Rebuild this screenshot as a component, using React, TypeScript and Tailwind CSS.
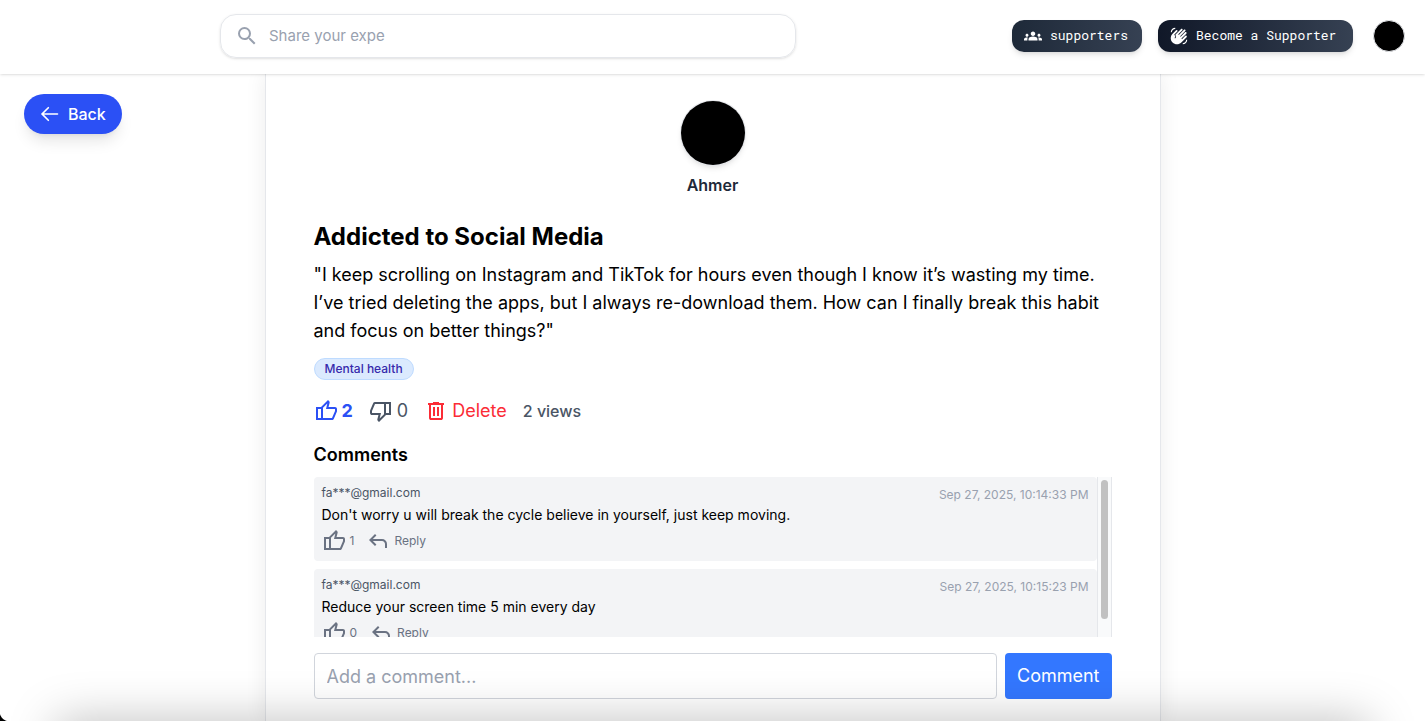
import { useState } from "react";
import type { ReactNode } from "react";
import { MdGroups, MdSearch, MdWavingHand } from "react-icons/md";

interface IconProps {
  path: string;
  className?: string;
}

const THUMB =
  "M720-120H280v-520l280-280 50 50q7 7 11.5 19t4.5 23v14l-44 174h258q32 0 56 24t24 56v80q0 7-2 15t-4 15L794-168q-9 20-30 34t-44 14Zm-360-80h360l120-280v-80H480l54-220-174 174v406Zm-80-440v80H160v360h120v80H80v-520h200Z";
const TRASH =
  "M280-120q-33 0-56.5-23.5T200-200v-520h-40v-80h200v-40h240v40h200v80h-40v520q0 33-23.5 56.5T680-120H280Zm400-600H280v520h400v-520ZM360-280h80v-360h-80v360Zm160 0h80v-360h-80v360Z";
const REPLY =
  "M760-200v-160q0-50-35-85t-85-35H273l144 144-57 56-240-240 240-240 57 56-144 144h367q83 0 141.5 58.5T840-360v160h-80Z";

const Icon = ({ path, className = "" }: IconProps) => (
  <svg
    viewBox="0 -960 960 960"
    fill="currentColor"
    aria-hidden="true"
    className={`size-6 shrink-0 ${className}`}
  >
    <path d={path} />
  </svg>
);

const DarkButton = ({
  className,
  children,
}: {
  className: string;
  children: ReactNode;
}) => (
  <button
    type="button"
    className={`flex h-8 items-center gap-2 rounded-xl bg-linear-to-r to-gray-700 px-3 font-['Roboto_Mono','DejaVu_Sans_Mono',monospace] text-[13px] text-white shadow-md ${className}`}
  >
    {children}
  </button>
);

const Header = () => (
  <header className="relative z-10 flex h-[74px] items-center bg-white pr-5 pb-0.5 shadow-sm">
    <label className="ml-[220px] flex h-11 w-full max-w-[576px] items-center gap-2.5 rounded-2xl border border-gray-200 px-3.5 shadow-sm">
      <MdSearch size={24} className="shrink-0 text-gray-400" />
      <input
        type="search"
        aria-label="Search"
        placeholder="Share your expe"
        className="w-full text-[15px] outline-none placeholder:text-gray-400"
      />
    </label>
    <div className="ml-auto flex items-center gap-4 whitespace-nowrap">
      <DarkButton className="w-[130px] from-gray-800">
        <MdGroups size={18} className="shrink-0" />
        supporters
      </DarkButton>
      <DarkButton className="w-[195px] from-gray-900">
        <MdWavingHand size={18} className="shrink-0" />
        Become a Supporter
      </DarkButton>
      <button
        type="button"
        aria-label="Account"
        className="ml-1 size-8 rounded-full border border-gray-200 bg-black"
      />
    </div>
  </header>
);

interface CommentData {
  author: string;
  date: string;
  text: string;
  likes: number;
}

const comments: CommentData[] = [
  {
    author: "fa***@gmail.com",
    date: "Sep 27, 2025, 10:14:33 PM",
    text: "Don't worry u will break the cycle believe in yourself, just keep moving.",
    likes: 1,
  },
  {
    author: "fa***@gmail.com",
    date: "Sep 27, 2025, 10:15:23 PM",
    text: "Reduce your screen time 5 min every day",
    likes: 0,
  },
];

const Comment = ({ author, date, text, likes }: CommentData) => (
  <li className="rounded-sm bg-gray-100 p-2">
    <div className="flex h-4 justify-between text-xs">
      <span className="text-gray-600">{author}</span>
      <time className="pt-0.5 text-gray-400">{date}</time>
    </div>
    <p className="mt-1 text-sm">{text}</p>
    <div className="mt-1 flex items-center gap-3 text-xs text-gray-500">
      <button type="button" className="flex items-center gap-1">
        <Icon path={THUMB} />
        {likes}
      </button>
      <button type="button" className="flex items-center gap-1">
        <Icon path={REPLY} />
        Reply
      </button>
    </div>
  </li>
);

export default function App() {
  const [comment, setComment] = useState("");

  return (
    <div className="relative flex h-screen flex-col overflow-hidden bg-white font-[Inter,sans-serif] text-black">
      <Header />
      <div className="grid min-h-0 grow grid-cols-[1fr_minmax(0,896px)_1fr]">
        <div className="px-6 pt-5">
          <button
            type="button"
            className="flex h-10 items-center gap-2 rounded-full bg-[#2b50f5] px-4 font-medium text-white shadow-lg"
          >
            <svg
              viewBox="0 0 24 24"
              fill="none"
              stroke="currentColor"
              strokeWidth="2"
              strokeLinecap="round"
              className="size-5"
              aria-hidden="true"
            >
              <path d="M10 19.500 2.500 12l7.500-7.500M2.500 12h18.500" />
            </svg>
            Back
          </button>
        </div>

        <main className="border-x border-gray-200 px-12 pt-[27px] shadow-[0_0_20px_rgba(0,0,0,0.08)]">
          <div className="flex flex-col items-center">
            <div className="size-16 rounded-full bg-black shadow-md ring-1 ring-gray-200" />
            <p className="mt-2 font-semibold text-gray-800">Ahmer</p>
          </div>

          <h1 className="mt-6 text-2xl font-bold">Addicted to Social Media</h1>
          <p className="mt-2 text-lg leading-7">
            "I keep scrolling on Instagram and TikTok for hours even though I
            know it’s wasting my time. I’ve tried deleting the apps, but I
            always re-download them. How can I finally break this habit and
            focus on better things?"
          </p>
          <div className="mt-3 flex h-6 items-center">
            <span className="rounded-full border border-blue-200 bg-blue-100 px-2.5 py-0.5 text-xs font-medium text-indigo-800">
              Mental health
            </span>
          </div>

          <div className="mt-4 flex items-center gap-4 text-lg text-gray-600">
            <button
              type="button"
              className="flex items-center gap-1 font-bold text-[#2b50f5]"
            >
              <Icon path={THUMB} />2
            </button>
            <button type="button" className="flex items-center gap-1">
              <Icon path={THUMB} className="rotate-180" />0
            </button>
            <button type="button" className="flex items-center gap-1 text-red-500">
              <Icon path={TRASH} />
              Delete
            </button>
            <span className="text-base font-medium">2 views</span>
          </div>

          <h2 className="mt-4 text-lg font-semibold">Comments</h2>
          <div className="mt-2 flex h-40">
            <ul className="grow space-y-2 overflow-hidden">
              {comments.map((item) => (
                <Comment key={item.date} {...item} />
              ))}
            </ul>
            <div className="w-[15px] border-x border-gray-200 bg-gray-50 px-[3px] pt-[3px]">
              <div className="h-[139px] rounded-full bg-[#c1c1c1]" />
            </div>
          </div>

          <form
            className="mt-4 flex gap-2 text-lg"
            onSubmit={(e) => e.preventDefault()}
          >
            <input
              type="text"
              aria-label="Add a comment"
              placeholder="Add a comment..."
              value={comment}
              onChange={(e) => setComment(e.target.value)}
              className="h-[46px] min-w-0 grow rounded-sm border border-gray-300 px-3 outline-none placeholder:text-gray-400"
            />
            <button
              type="submit"
              className="rounded-sm bg-[#3377ff] px-3 text-white"
            >
              Comment
            </button>
          </form>
        </main>
      </div>

      {/* window edge */}
      <div className="pointer-events-none absolute inset-x-14 top-full h-12 shadow-[0_0_48px_rgba(0,0,0,0.26)]" />
      <div className="pointer-events-none absolute bottom-0 left-0 size-2.5 bg-[radial-gradient(circle_at_top_right,transparent_10px,black_11px)]" />
    </div>
  );
}
